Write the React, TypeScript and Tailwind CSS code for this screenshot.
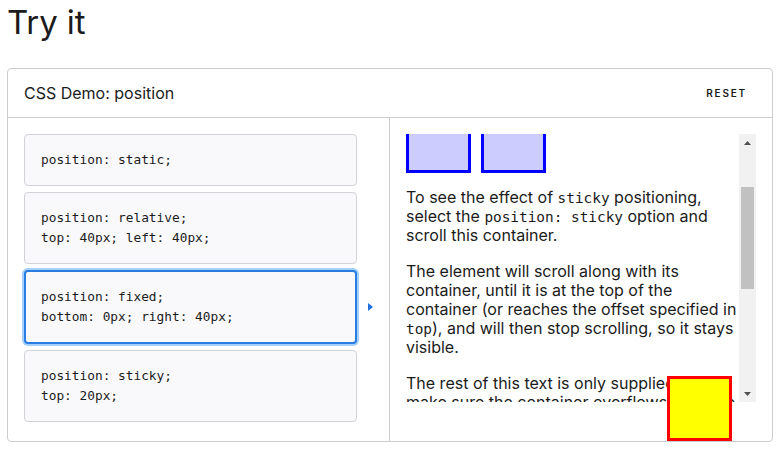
import React from "react";

const options = [
  ["position: static;"],
  ["position: relative;", "top: 40px; left: 40px;"],
  ["position: fixed;", "bottom: 0px; right: 40px;"],
  ["position: sticky;", "top: 20px;"],
];

const mono = "font-['DejaVu_Sans_Mono','Liberation_Mono',monospace]";
const inlineCode = `${mono} text-[14.4px] leading-[1]`;

export default function App() {
  return (
    <div className="min-h-[451px] bg-white text-[#1b1b1b] font-['Inter','Noto_Sans',sans-serif]">
      <h2 className="pl-[7px] pt-[2px] text-[33px] leading-[40px] font-normal tracking-[-0.1px]">Try it</h2>
      <div className="ml-[7px] mt-[26px] w-[766px] border border-[#cdcdcd] rounded-[4px]">
        <div className="h-[49px] flex items-center justify-between pl-4 pr-[25px] border-b border-[#cdcdcd]">
          <span className="text-[16px] leading-none">CSS Demo: position</span>
          <span className="text-[10px] font-semibold tracking-[1.8px] leading-none">RESET</span>
        </div>
        <div className="flex h-[323px]">
          <div className="w-[382px] border-r border-[#cdcdcd] pt-4 pl-4 flex flex-col gap-[6px]">
            {options.map((lines, i) => {
              const sel = i === 2;
              return (
                <div key={i} className="flex items-center">
                  <div
                    className={
                      sel
                        ? "w-[333px] rounded-[4px] bg-[#f9f9fb] border-2 border-[#2a7de1] ring-2 ring-[#a3d1fb] py-[15px] px-[15px]"
                        : "w-[333px] rounded-[4px] bg-[#f9f9fb] border border-[#d2d2d8] py-[15px] px-4"
                    }
                  >
                    {lines.map((l, j) => (
                      <div key={j} className={`${mono} text-[12.8px] leading-[20px] whitespace-pre text-[#1b1b1b]`}>
                        {l}
                      </div>
                    ))}
                  </div>
                  {sel && (
                    <svg className="ml-[11px]" width="5" height="8" viewBox="0 0 5 8">
                      <path d="M0 0 L5 4 L0 8 Z" fill="#1f6fe0" />
                    </svg>
                  )}
                </div>
              );
            })}
          </div>
          <div className="relative flex-1 p-4">
            <div className="flex h-[268px]">
              <div className="w-[333px] overflow-hidden">
                <div className="-mt-[26px] flex gap-[10px]">
                  <div className="w-[65px] h-[65px] border-[3px] border-[#0000ff] bg-[#ccccff]" />
                  <div className="w-[65px] h-[65px] border-[3px] border-[#0000ff] bg-[#ccccff]" />
                </div>
                <p className="mt-[15px] text-[16px] leading-[19.2px]">
                  To see the effect of <code className={inlineCode}>sticky</code> positioning, select the{" "}
                  <code className={inlineCode}>position: sticky</code> option and scroll this container.
                </p>
                <p className="mt-4 text-[16px] leading-[19.2px]">
                  The element will scroll along with its container, until it is at the top of the container (or reaches
                  the offset specified in <code className={inlineCode}>top</code>), and will then stop scrolling, so it
                  stays visible.
                </p>
                <p className="mt-4 text-[16px] leading-[19.2px]">
                  The rest of this text is only supplied to make sure the container overflows, so as to enable you to
                  scroll it and see the effect.
                </p>
              </div>
              <div className="w-[17px] bg-[#f1f1f1] flex flex-col">
                <div className="h-[17px] flex items-center justify-center">
                  <svg width="7" height="4" viewBox="0 0 7 4">
                    <path d="M0 4 L3.5 0 L7 4 Z" fill="#505050" />
                  </svg>
                </div>
                <div className="mt-[36px] mx-[2px] h-[102px] bg-[#c1c1c1]" />
                <div className="flex-1" />
                <div className="h-[17px] flex items-center justify-center">
                  <svg width="7" height="4" viewBox="0 0 7 4">
                    <path d="M0 0 L7 0 L3.5 4 Z" fill="#505050" />
                  </svg>
                </div>
              </div>
            </div>
            <div className="absolute right-[40px] bottom-0 w-[65px] h-[65px] border-[3px] border-[#ff0000] bg-[#ffff00]" />
          </div>
        </div>
      </div>
    </div>
  );
}
